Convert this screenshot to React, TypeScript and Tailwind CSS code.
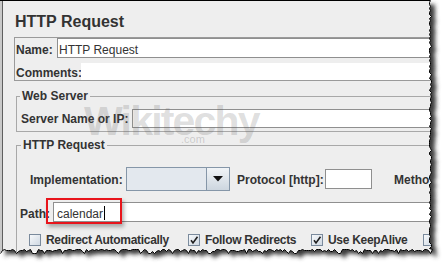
import React from 'react';

// torn paper edge, generated once from a fixed seed
function rng(seed: number) {
	let s = seed;
	return () => {
		s = (s * 16807) % 2147483647;
		return s / 2147483647;
	};
}

const r = rng(1234);
const rightEdge: number[][] = [[430, 0]];
for (let y = 2; y <= 248; y += 2) {
	const j = r();
	rightEdge.push([430 + Math.round((j - 0.5) * 3) - (j > 0.86 ? 2 : 0), y]);
}
const bottomEdge: number[][] = [];
for (let x = 432; x >= 0; x -= 2) {
	const j = r();
	bottomEdge.push([x, 250 + Math.round((j - 0.5) * 3) + (j > 0.86 ? 2 : 0)]);
}

const pts = (list: number[][]) => list.map(([x, y]) => `L${x + 0.5},${y + 0.5}`).join(' ');
const panelPath = `M0,0 ${pts(rightEdge)} ${pts(bottomEdge)} L0,0 Z`;
const outsidePath = `M430,0 L448,0 L448,269 L0,269 ${pts([...bottomEdge].reverse())} ${pts(
	[...rightEdge].reverse()
)} Z`;
const edgePath = `M430.5,0.5 ${pts(rightEdge)} ${pts(bottomEdge)}`;

const label = 'text-[12px] font-bold leading-[14px] whitespace-nowrap';

const CheckBox = ({ checked }: { checked?: boolean }) => (
	<span className="mt-[1px] flex h-[12px] w-[12px] items-center justify-center border border-[#7a8a9c] bg-gradient-to-br from-[#f7f9fb] to-[#cfd8e2]">
		{checked && (
			<svg width="10" height="10" viewBox="0 0 10 10">
				<path d="M2 5.2 L4 8 L8.5 1.8" fill="none" stroke="#1f1f1f" strokeWidth="1.6" />
			</svg>
		)}
	</span>
);

const checks = [
	{ name: 'Redirect Automatically', width: 'w-[159px]', checked: false },
	{ name: 'Follow Redirects', width: 'w-[123px]', checked: true },
	{ name: 'Use KeepAlive', width: 'w-[112px]', checked: true },
];

export default function App() {
	return (
		<div className="relative h-[269px] w-[448px] overflow-hidden bg-white font-['Liberation_Sans',Arial,sans-serif] text-[#333]">
			<div className="h-[252px] w-[440px] border-t border-black bg-[#c9c9c9] pl-[2px]">
				<div className="h-full overflow-hidden border-l border-[#5f5f5f] bg-[#eeeeee]">
					<h1 className="ml-[12px] mt-[12px] text-[16px] font-bold leading-[18px]">HTTP Request</h1>

					{/* name / comments */}
					<div className="ml-[11px] mt-[6px] w-[500px] border border-[#9a9a9a]">
						<div className="flex h-[20px]">
							<span className={`${label} ml-[1px] w-[41px] pt-[5px]`}>Name:</span>
							<div className="flex-1 border border-[#8f8f8f] bg-white pl-[1px] pt-[4px] text-[12px] leading-[14px]">
								HTTP Request
							</div>
						</div>
						<div className="mt-[5px] flex h-[17px]">
							<span className={`${label} ml-[1px] w-[65px] pt-[3px]`}>Comments:</span>
							<div className="flex-1 bg-white" />
						</div>
					</div>

					{/* web server */}
					<fieldset className="ml-[13px] mt-[8px] w-[500px] border border-[#a8a8a8] pb-[3px]">
						<legend className={`${label} ml-[3px] px-[2px]`}>Web Server</legend>
						<div className="mt-[6px] flex h-[19px]">
							<span className={`${label} ml-[4px] w-[111px] pt-[3px]`}>Server Name or IP:</span>
							<div className="flex-1 border border-[#8f8f8f] bg-white" />
						</div>
					</fieldset>

					{/* http request */}
					<fieldset className="ml-[13px] mt-[6px] w-[500px] border border-[#a8a8a8] pb-[20px]">
						<legend className={`${label} ml-[4px] px-[2px]`}>HTTP Request</legend>
						<div className="mt-[15px] flex h-[24px]">
							<span className={`${label} ml-[13px] w-[96px] pt-[6px]`}>Implementation:</span>
							<div className="flex w-[104px]">
								<div className="w-[81px] border border-[#8596a8] bg-[#e3e8ee]" />
								<div className="flex w-[23px] items-center justify-center border border-l-0 border-[#8596a8] bg-gradient-to-b from-[#f1f4f7] to-[#cdd6df]">
									<svg width="10" height="6" viewBox="0 0 10 6">
										<path d="M0 0 H10 L5 5.5 Z" fill="#111" />
									</svg>
								</div>
							</div>
							<span className={`${label} ml-[7px] w-[88px] pt-[6px]`}>Protocol [http]:</span>
							<div className="mt-[2px] h-[20px] w-[47px] border border-[#8f8f8f] bg-white" />
							<span className={`${label} ml-[22px] pt-[6px]`}>Metho</span>
						</div>

						<div className="mt-[11px] flex h-[20px]">
							<span className={`${label} ml-[3px] w-[33px] pt-[5px]`}>Path:</span>
							<div className="flex flex-1 items-start border border-[#8f8f8f] bg-white pl-[3px] pt-[4px] text-[12px] leading-[14px]">
								calendar
								<span className="ml-[1px] mt-[-1px] inline-block h-[14px] w-[1px] bg-black" />
							</div>
						</div>

						<div className="mt-[11px] flex h-[14px]">
							<div className="ml-[12px] flex">
								{checks.map((c) => (
									<div key={c.name} className={`flex gap-[5px] ${c.width}`}>
										<CheckBox checked={c.checked} />
										<span className={`${label} tracking-[-0.3px]`}>{c.name}</span>
									</div>
								))}
								<CheckBox />
							</div>
						</div>
					</fieldset>
				</div>
			</div>

			{/* watermark */}
			<span className="pointer-events-none absolute left-[84px] top-[101px] text-[41px] font-bold leading-none tracking-[-1.8px] text-[rgba(90,90,90,0.2)]">
				Wikitechy
			</span>
			<span className="pointer-events-none absolute left-[181px] top-[134px] text-[11px] leading-none text-[rgba(90,90,90,0.25)]">
				.com
			</span>

			{/* red highlight */}
			<div className="absolute left-[46px] top-[198px] h-[26px] w-[76px] border-2 border-[#e8141b] shadow-[2px_3px_4px_rgba(0,0,0,0.3)]" />

			{/* torn edge */}
			<svg className="pointer-events-none absolute left-0 top-0" width="448" height="269">
				<defs>
					<filter id="blur" x="-10%" y="-10%" width="120%" height="120%">
						<feGaussianBlur stdDeviation="2.2" />
					</filter>
					<clipPath id="outside">
						<path d={outsidePath} />
					</clipPath>
				</defs>
				<path d={outsidePath} fill="#fff" />
				<g clipPath="url(#outside)">
					<path d={panelPath} transform="translate(5,4)" fill="#3a3a3a" filter="url(#blur)" />
				</g>
				<path d={edgePath} fill="none" stroke="#000" strokeWidth="1" />
			</svg>
		</div>
	);
}
